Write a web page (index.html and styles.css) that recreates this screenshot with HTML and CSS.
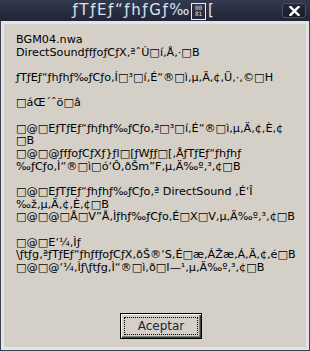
FILE: index.html
```html
<!DOCTYPE html>
<html>
<head>
<meta charset="utf-8">
<link rel="stylesheet" href="styles.css">
</head>
<body>
<div class="win">
  <div class="titlebar">
    <div class="title">ƒTƒEƒ“ƒhƒGƒ‰<span class="hex"><span>00</span><span>81</span></span>[</div>
    <div class="close"><svg width="11" height="10" viewBox="0 0 11 10"><path d="M1.5 1 L9.5 9 M9.5 1 L1.5 9" stroke="#fff" stroke-width="2.4" stroke-linecap="square"/></svg></div>
  </div>
  <div class="client">
    <div class="msg">BGM04.nwa<br>DirectSoundƒfƒoƒCƒX‚ªˆÙ□í‚Å‚·□B<br><br>ƒTƒEƒ“ƒhƒhƒ‰ƒCƒo‚Í□³□í‚É“®□ì‚µ‚Ä‚¢‚Ü‚·‚©□H<br><br>□áŒ´ˆö□â<br><br>□@□EƒTƒEƒ“ƒhƒhƒ‰ƒCƒo‚ª□³□í‚É“®□ì‚µ‚Ä‚¢‚È‚¢<br>□B<br>□@□@ƒfƒoƒCƒXƒ}ƒl□[ƒWƒƒ□[‚ÅƒTƒEƒ“ƒhƒhƒ<br>‰ƒCƒo‚Ì“®□ì□ó‘Ô‚ðŠm”F‚µ‚Ä‰º‚³‚¢□B<br><br>□@□EƒTƒEƒ“ƒhƒhƒ‰ƒCƒo‚ª DirectSound ‚É‘Î<br>‰ž‚µ‚Ä‚¢‚È‚¢□B<br>□@□@□Å□V”Å‚Ìƒhƒ‰ƒCƒo‚É□X□V‚µ‚Ä‰º‚³‚¢□B<br><br>□@□E‘¼‚Ìƒ<br>\ƒtƒg‚ªƒTƒEƒ“ƒhƒfƒoƒCƒX‚ðŠ®‘S‚É□æ‚ÁŽæ‚Á‚Ä‚¢‚é□B<br>□@□@‘¼‚Ìƒ\ƒtƒg‚Ì“®□ì‚ð□I—¹‚µ‚Ä‰º‚³‚¢□B</div>
    <div class="actions"><button class="btn"><span class="focus">Aceptar</span></button></div>
  </div>
</div>
</body>
</html>
```

FILE: styles.css
```css
html, body {
  margin: 0;
  padding: 0;
  background: #d4d0c8;
}
.win {
  width: 310px;
  height: 351px;
  box-sizing: border-box;
  display: flex;
  flex-direction: column;
  background: #3c4252;
}
.titlebar {
  height: 21px;
  flex: none;
  display: flex;
  align-items: center;
  background: linear-gradient(#343a4e, #1f2535);
}
.title {
  flex: 1;
  height: 21px;
  display: flex;
  align-items: center;
  justify-content: center;
  padding-left: 6px;
  font-family: "DejaVu Sans", sans-serif;
  font-size: 15px;
  letter-spacing: 1.6px;
  color: #d8e2f4;
  white-space: nowrap;
  line-height: 17px;
}
.hex {
  display: inline-flex;
  flex-direction: column;
  justify-content: center;
  width: 13px;
  height: 15px;
  border: 1px solid #e8eef8;
  margin: 1px 2px 0 0;
  font-family: "DejaVu Sans Mono", monospace;
  font-size: 6px;
  line-height: 6px;
  letter-spacing: 0;
  text-align: center;
}
.close {
  flex: none;
  width: 22px;
  height: 13px;
  margin-right: 4px;
  border: 1px solid #4a5167;
  border-radius: 3px;
  background: linear-gradient(#252b3b, #171c28);
  display: flex;
  align-items: center;
  justify-content: center;
}
.client {
  flex: 1;
  margin: 0 1px 1px 1px;
  border: 3px solid #e4e4e8;
  background: #d4d0c8;
  display: flex;
  flex-direction: column;
  padding: 10px 0 0 12px;
}
.msg {
  font-family: "DejaVu Sans", sans-serif;
  font-size: 11.2px;
  line-height: 12.67px;
  color: #000;
  white-space: nowrap;
}
.actions {
  margin-top: auto;
  display: flex;
  justify-content: center;
  padding: 0 0 8px 0;
}
.btn {
  width: 82px;
  height: 26px;
  padding: 0;
  border: 1px solid #000;
  background: #d4d0c8;
  box-shadow: inset 1px 1px #fff, inset -1px -1px #404040, inset -2px -2px #808080;
  display: flex;
  align-items: stretch;
  justify-content: stretch;
  font-family: "DejaVu Sans", sans-serif;
  font-size: 12px;
  color: #1a2338;
}
.focus {
  flex: 1;
  margin: 3px;
  border: 1px dotted #000;
  display: flex;
  align-items: center;
  justify-content: center;
}
```
